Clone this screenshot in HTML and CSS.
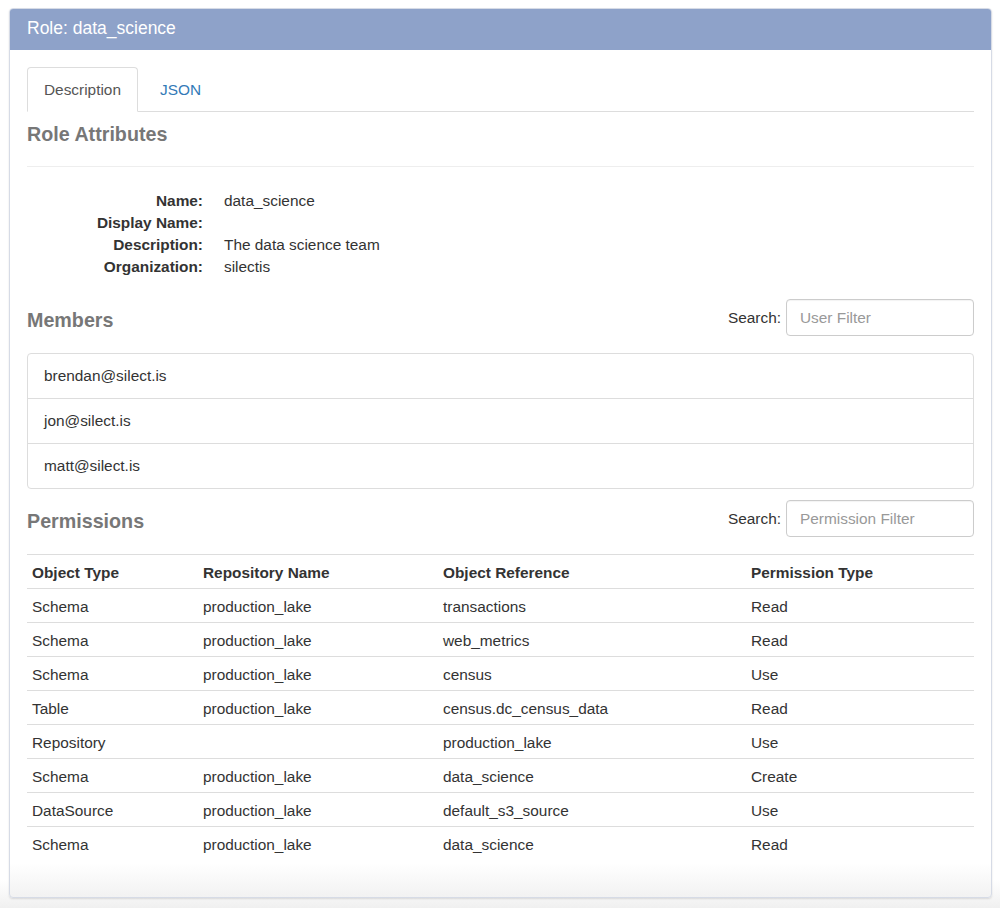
FILE: index.html
```html
<!DOCTYPE html>
<html>
<head>
<meta charset="utf-8">
<link rel="stylesheet" href="styles.css">
</head>
<body>
<div class="panel">
  <div class="panel-heading">Role: data_science</div>
  <div class="panel-body">
    <ul class="tabs">
      <li class="tab active">Description</li>
      <li class="tab"><a class="tab-link">JSON</a></li>
    </ul>

    <h4 class="section-title first">Role Attributes</h4>
    <div class="rule"></div>

    <dl class="attrs">
      <dt>Name:</dt><dd>data_science</dd>
      <dt>Display Name:</dt><dd></dd>
      <dt>Description:</dt><dd>The data science team</dd>
      <dt>Organization:</dt><dd>silectis</dd>
    </dl>

    <div class="section-head members-head">
      <h4 class="section-title">Members</h4>
      <label class="search">Search:<input class="filter" type="text" placeholder="User Filter"></label>
    </div>
    <ul class="list-group">
      <li class="list-item">brendan@silect.is</li>
      <li class="list-item">jon@silect.is</li>
      <li class="list-item">matt@silect.is</li>
    </ul>

    <div class="section-head perms-head">
      <h4 class="section-title">Permissions</h4>
      <label class="search">Search:<input class="filter" type="text" placeholder="Permission Filter"></label>
    </div>
    <table class="table">
      <colgroup>
        <col class="c1"><col class="c2"><col class="c3"><col class="c4">
      </colgroup>
      <thead>
        <tr><th>Object Type</th><th>Repository Name</th><th>Object Reference</th><th>Permission Type</th></tr>
      </thead>
      <tbody>
        <tr><td>Schema</td><td>production_lake</td><td>transactions</td><td>Read</td></tr>
        <tr><td>Schema</td><td>production_lake</td><td>web_metrics</td><td>Read</td></tr>
        <tr><td>Schema</td><td>production_lake</td><td>census</td><td>Use</td></tr>
        <tr><td>Table</td><td>production_lake</td><td>census.dc_census_data</td><td>Read</td></tr>
        <tr><td>Repository</td><td></td><td>production_lake</td><td>Use</td></tr>
        <tr><td>Schema</td><td>production_lake</td><td>data_science</td><td>Create</td></tr>
        <tr><td>DataSource</td><td>production_lake</td><td>default_s3_source</td><td>Use</td></tr>
        <tr><td>Schema</td><td>production_lake</td><td>data_science</td><td>Read</td></tr>
      </tbody>
    </table>
  </div>
</div>
</body>
</html>
```

FILE: styles.css
```css
* { box-sizing: border-box; }
html, body { margin: 0; padding: 0; }
body {
  font-family: "Liberation Sans", Arial, Helvetica, sans-serif;
  font-size: 15.4px;
  line-height: 21px;
  color: #333;
  background: linear-gradient(to bottom, #fff 0, #fff 880px, #f0f0f0 908px);
  height: 908px;
  overflow: hidden;
}
.panel {
  margin: 8px 8px 0 9px;
  border: 1px solid #d6dbe6;
  border-radius: 4px;
  background: linear-gradient(to bottom, #fff 0, #fff calc(100% - 34px), #f2f2f2 100%);
  box-shadow: 0 1px 2px rgba(0,0,0,0.12);
  overflow: hidden;
}
.panel-heading {
  background: #8ea2c9;
  color: #fff;
  font-size: 17.5px;
  line-height: 21px;
  padding: 9px 17px 11px;
  height: 41px;
}
.panel-body {
  padding: 17px 17px 17px;
}
.tabs {
  list-style: none;
  margin: 0;
  padding: 0;
  display: flex;
  border-bottom: 1px solid #ddd;
  height: 45px;
}
.tab {
  padding: 11px 16px 11px;
  margin-right: 2px;
  border: 1px solid transparent;
  border-radius: 4px 4px 0 0;
  height: 45px;
}
.tab.active {
  border-color: #ddd;
  border-bottom-color: #fff;
  background: #fff;
  color: #555;
}
.tab-link { color: #337ab7; padding-left: 3px; }
.section-title {
  margin: 0;
  font-size: 19.7px;
  line-height: 21px;
  font-weight: bold;
  color: #777;
}
.section-title.first { margin-top: 12px; }
.rule {
  border-top: 1px solid #eee;
  margin-top: 21px;
  margin-bottom: 23px;
}
.attrs {
  margin: 0;
  display: grid;
  grid-template-columns: 176px 1fr;
  column-gap: 21px;
}
.attrs dt {
  text-align: right;
  font-weight: bold;
  line-height: 22px;
  min-height: 22px;
}
.attrs dd {
  margin: 0;
  line-height: 22px;
  min-height: 22px;
}
.section-head {
  display: flex;
  justify-content: space-between;
  align-items: center;
}
.section-head .section-title { padding-top: 5px; }
.members-head { margin-top: 21px; margin-bottom: 17px; }
.perms-head { margin-top: 11px; margin-bottom: 17px; }
.search {
  display: flex;
  align-items: center;
  gap: 5px;
  font-weight: normal;
}
.filter {
  width: 188px;
  height: 37px;
  border: 1px solid #ccc;
  border-radius: 4px;
  padding: 6px 13px;
  font-family: inherit;
  font-size: 15.4px;
  color: #555;
  box-shadow: inset 0 1px 1px rgba(0,0,0,0.05);
}
.filter::placeholder { color: #999; }
.list-group {
  list-style: none;
  margin: 0;
  padding: 0;
  border: 1px solid #ddd;
  border-radius: 4px;
}
.list-item {
  padding: 11px 16px 11px;
  line-height: 22px;
  height: 44px;
}
.list-item + .list-item { border-top: 1px solid #ddd; height: 45px; }
.table {
  width: 100%;
  border-collapse: collapse;
  table-layout: fixed;
  margin-bottom: 19px;
}
.c1 { width: 171px; }
.c2 { width: 240px; }
.c3 { width: 308px; }
.table th, .table td {
  text-align: left;
  padding: 7px 5px 5px;
  height: 34px;
  line-height: 21px;
  border-top: 1px solid #ddd;
  vertical-align: top;
}
.table th { font-weight: bold; }
.table thead th { border-bottom: 1px solid #ddd; }
.table tbody tr:first-child td { border-top: 0; height: 33px; }
```
